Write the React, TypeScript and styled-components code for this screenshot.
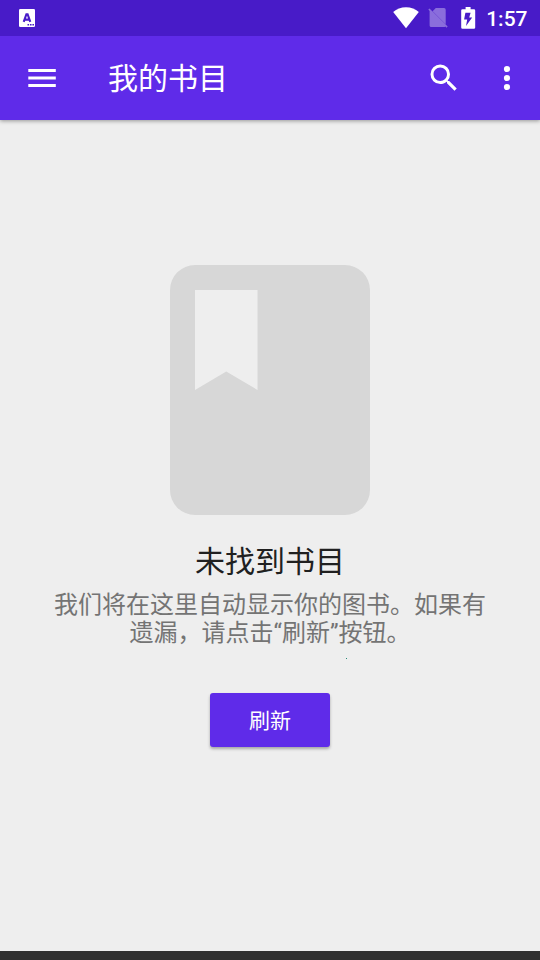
import React from "react";
import styled, { createGlobalStyle } from "styled-components";

const GlobalStyle = createGlobalStyle`
  *, *::before, *::after { box-sizing: border-box; }
  html, body { margin: 0; padding: 0; }
  body {
    font-family: Roboto, "Noto Sans CJK SC", sans-serif;
    background: #eeeeee;
  }
`;

const Screen = styled.div`
  width: 540px;
  height: 960px;
  display: flex;
  flex-direction: column;
  background: #eeeeee;
  overflow: hidden;
`;

const StatusBar = styled.header`
  flex: none;
  height: 36px;
  padding: 0 12.5px 0 19px;
  display: flex;
  align-items: center;
  justify-content: space-between;
  background: #481bc8;
  color: #ffffff;
`;

const StatusIcons = styled.div`
  display: flex;
  align-items: flex-start;
`;

const Glyph = styled.svg<{ $gap?: number; $drop?: number }>`
  display: block;
  flex: none;
  margin-top: ${({ $drop = 0 }) => $drop}px;
  margin-right: ${({ $gap = 0 }) => $gap}px;
`;

const Clock = styled.span`
  font-size: 21px;
  font-weight: 500;
  line-height: 24px;
  padding-top: 1px;
`;

const AppBar = styled.nav`
  flex: none;
  height: 84px;
  display: flex;
  align-items: center;
  padding: 0 12px 0 21px;
  background: #5f2be9;
  box-shadow: 0 1px 4px rgba(0, 0, 0, 0.38);
  clip-path: inset(0 0 -10px 0);
  color: #ffffff;
`;

const IconButton = styled.button`
  width: 42px;
  height: 42px;
  padding: 0;
  border: 0;
  background: none;
  color: inherit;
  display: grid;
  place-items: center;
`;

const Title = styled.h1`
  flex: 1;
  margin: 0 0 0 45px;
  padding-top: 2px;
  font-size: 30px;
  font-weight: 400;
  line-height: 36px;
`;

const Actions = styled.div`
  display: flex;
  gap: 21px;
`;

const EmptyState = styled.main`
  flex: 1;
  min-height: 0;
  display: flex;
  flex-direction: column;
  align-items: center;
  padding-top: 145px;
  position: relative;
`;

const Headline = styled.h2`
  margin: 29px 0 0;
  font-size: 30px;
  font-weight: 400;
  line-height: 36px;
  color: #202020;
`;

const Message = styled.p`
  margin: 11px 0 0;
  width: 440px;
  font-size: 24px;
  line-height: 28px;
  text-align: center;
  color: #747474;
`;

const Speck = styled.i`
  position: absolute;
  left: 346px;
  top: 538px;
  width: 1px;
  height: 1px;
  background: #278b77;
`;

const RefreshButton = styled.button`
  margin-top: 46px;
  width: 120px;
  height: 54px;
  padding: 2px 0 0;
  border: 0;
  border-radius: 3px;
  background: #5f2be9;
  color: #ffffff;
  font-family: inherit;
  font-size: 21px;
  line-height: 24px;
  box-shadow: 0 2px 3px rgba(0, 0, 0, 0.3);
`;

const NavigationStrip = styled.footer`
  flex: none;
  height: 9px;
  background: #303030;
`;

const KeyboardIcon = () => (
  <Glyph width="16" height="18" viewBox="0 0 16 18">
    <rect width="16" height="18" rx="1.3" fill="#fff" />
    <path
      d="M4.700 12.800 7.400 5.200H8.600L11.300 12.800M6 10.600h4"
      fill="none"
      stroke="#481bc8"
      strokeWidth="2.1"
    />
    <path d="M8.500 15h1.600v1.400H8.500zM11 15h1.600v1.400H11zM13.400 15H15v1.400h-1.600z" fill="#481bc8" />
  </Glyph>
);

const WifiIcon = () => (
  <Glyph $gap={9} $drop={1} width="26" height="22" viewBox="0 0 26 22">
    <path d="M13 21.200.2 5.100C3.600 2.100 8 .3 13 .3s9.400 1.800 12.800 4.800z" fill="#fff" />
  </Glyph>
);

const NoSimIcon = () => (
  <Glyph $gap={13} $drop={1} width="20" height="22" viewBox="0 0 20 22">
    <path
      d="M7.800 1H16q1.700 0 1.700 1.700V17.300L4.600 4.300zM1.600 3.900.3 2.600 1.500 1.400 19.700 19.600 18.500 20.800 17.300 19.600Q17 20.100 16 20.100H3.300q-1.700 0-1.700-1.700z"
      fill="#fff"
      opacity=".36"
    />
  </Glyph>
);

const BatteryIcon = () => (
  <Glyph $gap={10.5} $drop={1} width="15" height="22" viewBox="0 0 15 22">
    <path
      fillRule="evenodd"
      d="M4.600 0h5v2.200h3.300q1.300 0 1.300 1.300v17q0 1.300-1.300 1.300H1.500Q.2 21.800.2 20.500v-17Q.2 2.200 1.500 2.200h3.100zM9.600 5.800H4.400L3.100 12.600H6.200L5 19 11.200 10.400H8.200z"
      fill="#fff"
    />
  </Glyph>
);

const MenuIcon = () => (
  <Glyph width="42" height="42" viewBox="0 0 42 42" fill="currentColor">
    <path d="M7.300 12h27.500v3.100H7.300zM7.300 19.500h27.500v3.100H7.300zM7.300 27h27.500v3.100H7.300z" />
  </Glyph>
);

const SearchIcon = () => (
  <Glyph width="36" height="36" viewBox="0 0 24 24" fill="currentColor">
    <path d="M15.500 14h-.79l-.28-.27A6.471 6.471 0 0 0 16 9.500 6.500 6.500 0 1 0 9.500 16c1.610 0 3.090-.59 4.230-1.570l.27.28v.79l5 4.990L20.490 19l-4.990-5zm-6 0C7.010 14 5 11.990 5 9.500S7.010 5 9.500 5 14 7.010 14 9.500 11.990 14 9.500 14z" />
  </Glyph>
);

const MoreIcon = () => (
  <Glyph width="36" height="36" viewBox="0 0 36 36" fill="currentColor">
    <circle cx="18" cy="9" r="3.100" />
    <circle cx="18" cy="18" r="3.100" />
    <circle cx="18" cy="27" r="3.100" />
  </Glyph>
);

const BookIllustration = () => (
  <Glyph width="200" height="250" viewBox="0 0 200 250">
    <path
      fillRule="evenodd"
      d="M25 0H175A25 25 0 0 1 200 25V225A25 25 0 0 1 175 250H25A25 25 0 0 1 0 225V25A25 25 0 0 1 25 0ZM25 25V125L56.250 106.500 87.500 125V25Z"
      fill="#d7d7d7"
    />
  </Glyph>
);

export default function App() {
  return (
    <Screen lang="zh-CN">
      <GlobalStyle />
      <StatusBar>
        <KeyboardIcon />
        <StatusIcons>
          <WifiIcon />
          <NoSimIcon />
          <BatteryIcon />
          <Clock>1:57</Clock>
        </StatusIcons>
      </StatusBar>
      <AppBar>
        <IconButton aria-label="菜单">
          <MenuIcon />
        </IconButton>
        <Title>我的书目</Title>
        <Actions>
          <IconButton aria-label="搜索">
            <SearchIcon />
          </IconButton>
          <IconButton aria-label="更多">
            <MoreIcon />
          </IconButton>
        </Actions>
      </AppBar>
      <EmptyState>
        <BookIllustration />
        <Headline>未找到书目</Headline>
        <Message>我们将在这里自动显示你的图书。如果有遗漏，请点击“刷新”按钮。</Message>
        <Speck />
        <RefreshButton>刷新</RefreshButton>
      </EmptyState>
      <NavigationStrip />
    </Screen>
  );
}
